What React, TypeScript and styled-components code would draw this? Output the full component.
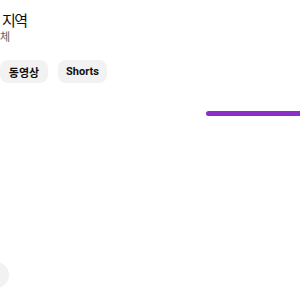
import React from "react";
import styled, { createGlobalStyle } from "styled-components";

const GlobalStyle = createGlobalStyle`
  html, body {
    margin: 0;
    padding: 0;
    background: #ffffff;
  }
  body {
    font-family: Roboto, "Noto Sans CJK KR", sans-serif;
    color: #0f0f0f;
  }
`;

const Page = styled.div`
  width: 300px;
  height: 300px;
  overflow: hidden;
  display: flex;
  flex-direction: column;
`;

const Header = styled.div`
  display: flex;
  flex-direction: column;
  padding-top: 12px;
`;

const Title = styled.h1`
  margin: 0 0 0 2px;
  font-family: Roboto, "Noto Sans CJK KR", sans-serif;
  font-size: 15px;
  font-weight: 400;
  line-height: 18px;
  letter-spacing: -1.5px;
  color: #0f0f0f;
`;

const SubTitle = styled.div`
  font-size: 11px;
  line-height: 16px;
  color: #606060;
`;

const ChipRow = styled.div`
  display: flex;
  gap: 10px;
  margin-top: 14px;
`;

const Chip = styled.button`
  min-width: 48px;
  height: 23px;
  padding: 0 8px;
  border: none;
  border-radius: 8px;
  background: #f2f2f2;
  color: #0f0f0f;
  font-family: Roboto, "Noto Sans CJK KR", sans-serif;
  font-size: 11px;
  font-weight: 700;
  display: flex;
  align-items: center;
  justify-content: center;
`;

const Track = styled.div`
  margin-top: 28px;
  display: flex;
  justify-content: flex-end;
`;

const Progress = styled.div`
  width: 100px;
  height: 5px;
  margin-right: -6px;
  border-radius: 3px;
  background: #8c2fc6;
`;

const ScrollButton = styled.div`
  margin-top: auto;
  margin-bottom: 12px;
  margin-left: -17px;
  width: 26px;
  height: 26px;
  border-radius: 50%;
  background: #f2f2f2;
`;

const App: React.FC = () => {
  return (
    <>
      <GlobalStyle />
      <Page>
        <Header>
          <Title>지역</Title>
          <SubTitle>체</SubTitle>
        </Header>
        <ChipRow>
          <Chip>동영상</Chip>
          <Chip>Shorts</Chip>
        </ChipRow>
        <Track>
          <Progress />
        </Track>
        <ScrollButton />
      </Page>
    </>
  );
};

export default App;
